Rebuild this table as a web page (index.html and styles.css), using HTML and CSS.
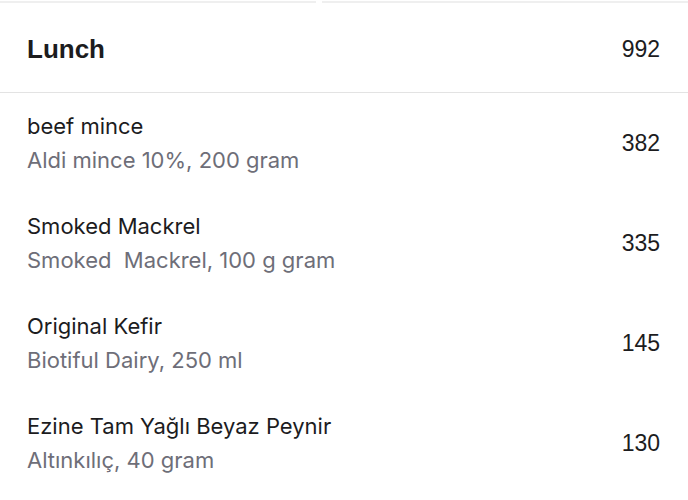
FILE: index.html
```html
<!DOCTYPE html>
<html lang="en">
<head>
  <meta charset="UTF-8">
  <meta name="viewport" content="width=device-width, initial-scale=1.0">
  <title>Lunch</title>
  <link rel="stylesheet" href="styles.css">
</head>
<body>

  <!-- Edge of the card above -->
  <div class="top-rule">
    <span></span>
    <span></span>
  </div>

  <!-- Meal header -->
  <div class="meal-header">
    <div class="meal-name">Lunch</div>
    <div class="meal-total">992</div>
  </div>

  <!-- Food entries -->
  <div class="entries">
    <div class="entry">
      <div class="entry-text">
        <div class="entry-title">beef mince</div>
        <div class="entry-sub">Aldi mince 10%, 200 gram</div>
      </div>
      <div class="entry-kcal">382</div>
    </div>
    <div class="entry">
      <div class="entry-text">
        <div class="entry-title">Smoked Mackrel</div>
        <div class="entry-sub">Smoked&nbsp; Mackrel, 100 g gram</div>
      </div>
      <div class="entry-kcal">335</div>
    </div>
    <div class="entry">
      <div class="entry-text">
        <div class="entry-title">Original Kefir</div>
        <div class="entry-sub">Biotiful Dairy, 250 ml</div>
      </div>
      <div class="entry-kcal">145</div>
    </div>
    <div class="entry">
      <div class="entry-text">
        <div class="entry-title">Ezine Tam Yağlı Beyaz Peynir</div>
        <div class="entry-sub">Altınkılıç, 40 gram</div>
      </div>
      <div class="entry-kcal">130</div>
    </div>
  </div>

</body>
</html>
```

FILE: styles.css
```css
    body {
      font-family: Inter, "Noto Sans", sans-serif;
      margin: 0;
      padding: 0;
      background-color: #fff;
      color: #1c1c1e;
    }
    .top-rule {
      display: flex;
      gap: 6px;
      padding-top: 1px;
    }
    .top-rule span {
      height: 2px;
      background-color: #efefef;
    }
    .top-rule span:first-child {
      width: 316px;
    }
    .top-rule span:last-child {
      flex: 1;
    }
    .meal-header {
      height: 86px;
      display: flex;
      justify-content: space-between;
      align-items: center;
      padding: 3px 28px 0 27px;
      border-bottom: 1px solid #e3e3e3;
    }
    .meal-name {
      font-family: "Liberation Sans", Arial, sans-serif;
      font-size: 26px;
      font-weight: bold;
    }
    .meal-total,
    .entry-kcal {
      font-family: "Liberation Sans", Arial, sans-serif;
      font-size: 23px;
    }
    .entry {
      height: 100px;
      display: flex;
      justify-content: space-between;
      align-items: center;
      padding: 0 28px 0 27px;
    }
    .entry-title {
      font-size: 22px;
      line-height: 34px;
    }
    .entry-sub {
      font-size: 22px;
      line-height: 34px;
      color: #6e6e78;
    }
```
